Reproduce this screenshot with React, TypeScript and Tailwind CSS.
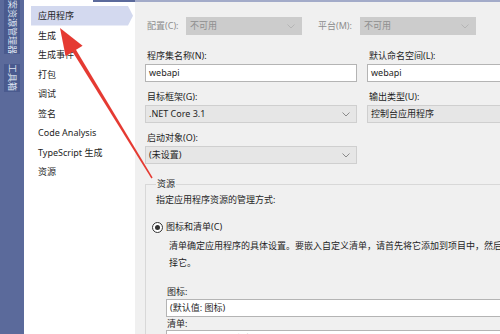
import type { ReactNode } from "react";

const navItems = ["应用程序", "生成", "生成事件", "打包", "调试", "签名", "Code Analysis", "TypeScript 生成", "资源"];

function Chevron({ light }: { light?: boolean }) {
  return (
    <svg width="8" height="5" viewBox="0 0 8 5" className="shrink-0">
      <polyline points="0.5,0.5 4,4 7.5,0.5" fill="none" stroke={light ? "#b5b5b5" : "#8a8a8a"} strokeWidth="1" />
    </svg>
  );
}

function Combo({ value, disabled, width }: { value: string; disabled?: boolean; width: string }) {
  return (
    <div
      className={`${width} h-[18px] flex items-center justify-between pl-[3px] pr-[6px] border ${
        disabled ? "bg-[#cccccc] border-[#cccccc] text-[#8e8e8e]" : "bg-[#e6e6e6] border-[#cfcfcf] text-[#1e1e1e]"
      }`}
    >
      <span className="whitespace-nowrap">{value}</span>
      <Chevron light={disabled} />
    </div>
  );
}

function TextBox({ value, className = "" }: { value: string; className?: string }) {
  return (
    <div className={`h-[18px] flex items-center pl-[3px] bg-white border border-[#b4b4b4] whitespace-nowrap ${className}`}>
      {value}
    </div>
  );
}

function Label({ children }: { children: ReactNode }) {
  return <div className="h-[14px] leading-[14px] pl-[2px] whitespace-nowrap">{children}</div>;
}

export default function App() {
  return (
    <div className="relative w-[500px] h-[334px] overflow-hidden flex text-[9px] text-[#1e1e1e] font-['Noto_Sans','Noto_Sans_CJK_SC',sans-serif]">
      {/* docked tool windows strip */}
      <aside className="w-[24px] shrink-0 bg-[#5b6a9b] flex flex-col items-center">
        <div className="w-[16px] h-[54px] bg-[#4a5a8e] overflow-hidden flex flex-col justify-end items-center">
          <span className="shrink-0 whitespace-nowrap text-[#dfe4f2] leading-[16px] [writing-mode:vertical-rl] [text-orientation:sideways]">
            解决方案资源管理器
          </span>
        </div>
        <div className="mt-[10px] w-[16px] h-[28px] bg-[#4a5a8e] flex justify-center items-center">
          <span className="whitespace-nowrap text-[#dfe4f2] leading-[16px] [writing-mode:vertical-rl] [text-orientation:sideways]">
            工具箱
          </span>
        </div>
      </aside>

      {/* property page list */}
      <nav className="w-[111px] shrink-0 bg-white flex flex-col">
        <div className="h-[2px] ml-[69px] bg-[#5b6a9b]" />
        <div className="pt-[4px] flex flex-col">
          {navItems.map((item, i) => (
            <div
              key={item}
              className={`h-[19.5px] flex items-center whitespace-nowrap ${
                i === 0
                  ? "ml-[7px] w-[102px] pl-[7px] bg-[#d3d9ef] [clip-path:polygon(0_0,calc(100%_-_5px)_0,100%_50%,calc(100%_-_5px)_100%,0_100%)]"
                  : "pl-[14px]"
              }`}
            >
              {item}
            </div>
          ))}
        </div>
      </nav>

      {/* page content */}
      <main className="flex-1 min-w-0 bg-[#f0f0f0] border-t-2 border-[#a3abc9] pl-[10px] flex flex-col">
        <div className="mt-[15px] flex items-center">
          <span className="w-[41px] pl-[2px] text-[#8d8d8d] whitespace-nowrap">配置(C):</span>
          <Combo value="不可用" disabled width="w-[116px]" />
          <span className="ml-[16px] w-[42px] text-[#8d8d8d] whitespace-nowrap">平台(M):</span>
          <Combo value="不可用" disabled width="w-[116px]" />
        </div>

        <div className="mt-[9px] h-px bg-[#d6d6d6] mr-[-20px]" />

        <div className="mt-[5px] grid grid-cols-[212px_160px] gap-x-[10px]">
          <div className="flex flex-col">
            <Label>程序集名称(N):</Label>
            <TextBox value="webapi" className="mt-px" />
            <div className="mt-[8px]">
              <Label>目标框架(G):</Label>
            </div>
            <div className="mt-px">
              <Combo value=".NET Core 3.1" width="w-full" />
            </div>
            <div className="mt-[8px]">
              <Label>启动对象(O):</Label>
            </div>
            <div className="mt-px">
              <Combo value="(未设置)" width="w-full" />
            </div>
          </div>
          <div className="flex flex-col">
            <Label>默认命名空间(L):</Label>
            <TextBox value="webapi" className="mt-px" />
            <div className="mt-[8px]">
              <Label>输出类型(U):</Label>
            </div>
            <div className="mt-px">
              <Combo value="控制台应用程序" width="w-full" />
            </div>
          </div>
        </div>

        <fieldset className="mt-[13px] mr-[-30px] border border-[#d8d8d8] pl-[6px] pb-4 flex flex-col">
          <legend className="ml-[4px] px-[1px] leading-[14px]">资源</legend>
          <div className="pl-[4px] mt-[2px] leading-[14px]">指定应用程序资源的管理方式:</div>
          <div className="mt-[13px] flex items-center h-[14px]">
            <span className="w-[11px] h-[11px] rounded-full border border-[#333] flex items-center justify-center bg-white">
              <span className="w-[5px] h-[5px] rounded-full bg-[#333]" />
            </span>
            <span className="ml-[3px]">图标和清单(C)</span>
          </div>
          <div className="pl-[17px] mt-[3px] leading-[17px] whitespace-nowrap">
            <div>清单确定应用程序的具体设置。要嵌入自定义清单，请首先将它添加到项目中，然后从下面的列表中选</div>
            <div>择它。</div>
          </div>
          <div className="pl-[15px] mt-[15px] leading-[12px]">图标:</div>
          <TextBox value="(默认值: 图标)" className="ml-[14px] mt-[1px]" />
          <div className="pl-[15px] mt-[1px] leading-[12px]">清单:</div>
          <TextBox value="嵌入带默认设置的清单" className="ml-[14px]" />
        </fieldset>
      </main>

      {/* red annotation arrow */}
      <svg className="absolute inset-0 pointer-events-none" width="500" height="334" viewBox="0 0 500 334">
        <polygon points="60,28 65.6,56.2 82.6,45.8" fill="#e53a32" />
        <polygon points="72.4,51.6 75.8,49.4 152.6,177.6 151.4,178.4" fill="#e53a32" />
      </svg>
    </div>
  );
}
